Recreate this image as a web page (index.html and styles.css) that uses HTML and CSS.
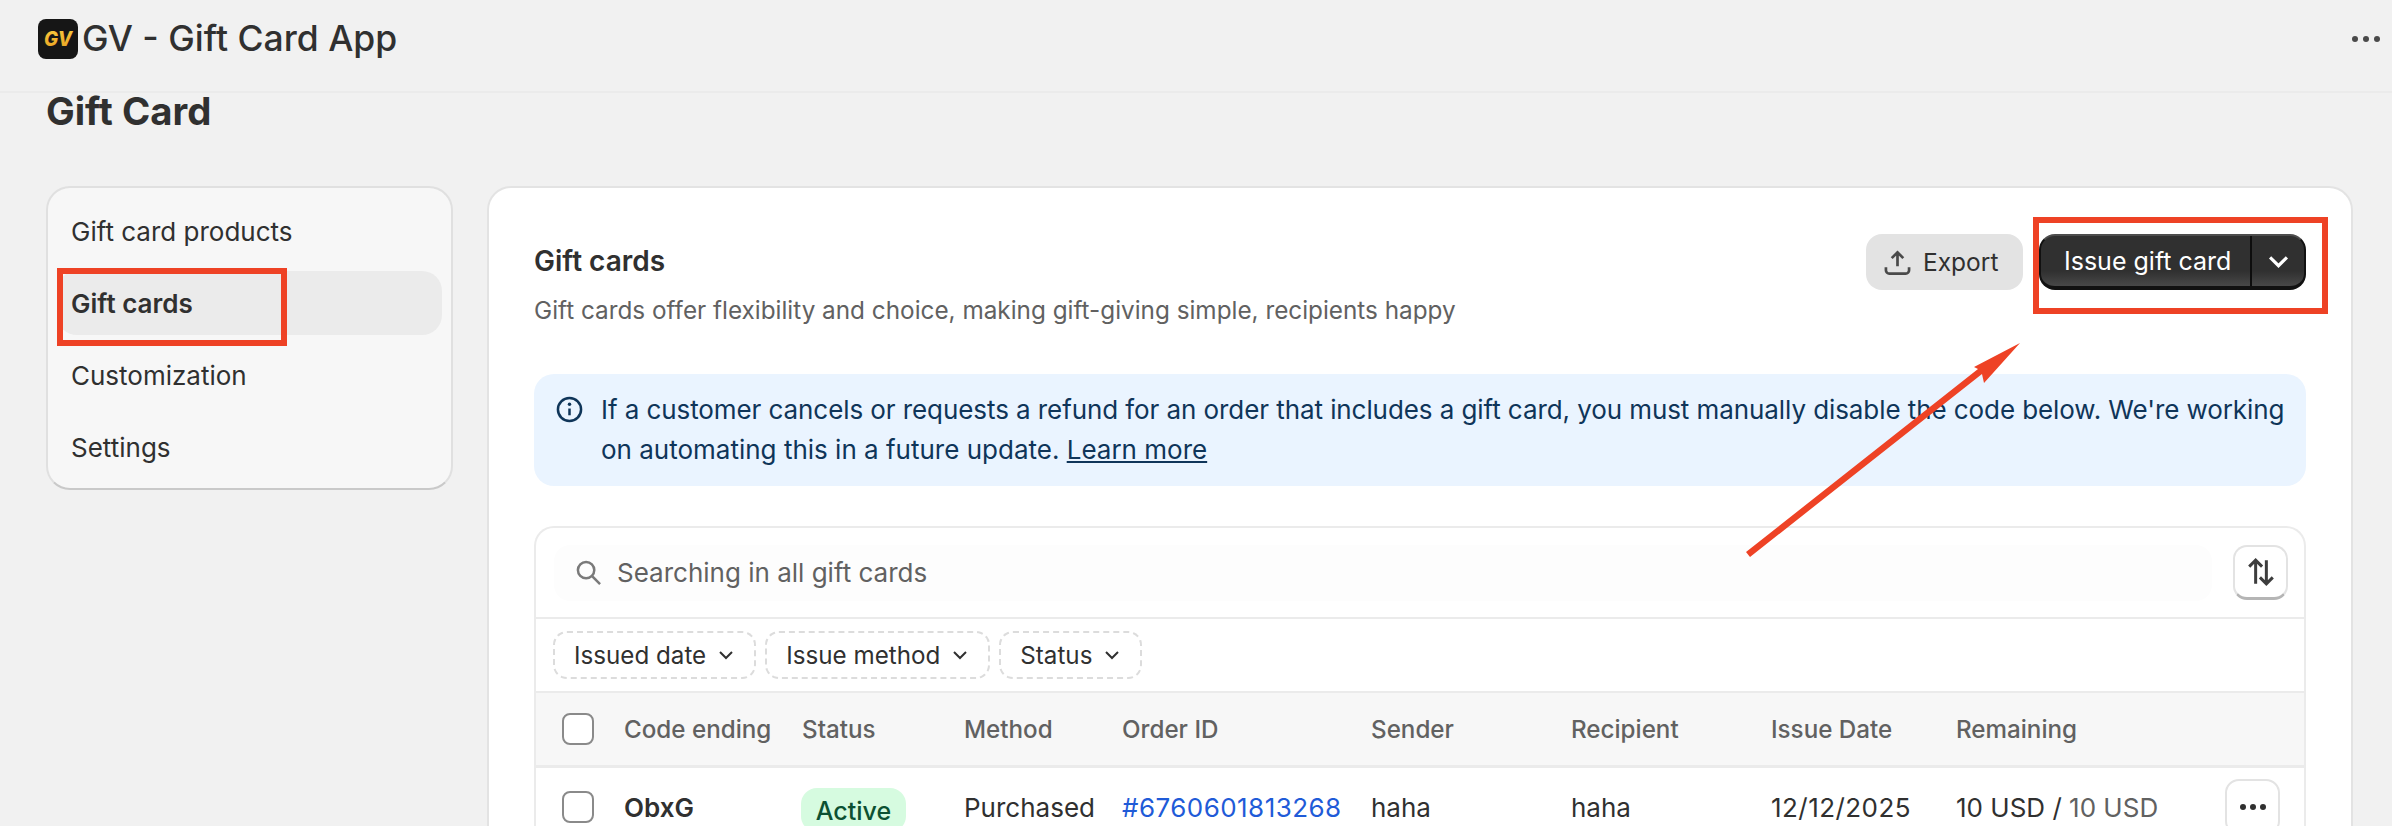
FILE: index.html
```html
<!DOCTYPE html>
<html lang="en">
<head>
	<meta charset="UTF-8">
	<title>GV - Gift Card App</title>
	<link rel="stylesheet" href="styles.css">
</head>
<body>
	<!-- top bar -->
	<div class="topbar">
		<div class="app">
			<svg class="logo" viewBox="0 0 40 40">
				<defs>
					<linearGradient id="gold" x1="0" y1="0" x2="0" y2="1">
						<stop offset="0" stop-color="#f9cc40"/>
						<stop offset="1" stop-color="#e8a020"/>
					</linearGradient>
				</defs>
				<rect width="40" height="40" rx="8" fill="#161616"/>
				<text class="logo-text" x="6" y="27" textLength="28" lengthAdjust="spacingAndGlyphs" fill="url(#gold)">GV</text>
			</svg>
			<span class="app-name">GV - Gift Card App</span>
		</div>
		<svg class="top-dots" viewBox="0 0 28 8"><circle cx="3" cy="4" r="3"/><circle cx="14" cy="4" r="3"/><circle cx="25" cy="4" r="3"/></svg>
	</div>

	<div class="page">
		<h1 class="page-title">Gift Card</h1>
		<div class="layout">
			<!-- side menu -->
			<ul class="side">
				<li>Gift card products</li>
				<li class="active">Gift cards</li>
				<li>Customization</li>
				<li>Settings</li>
			</ul>

			<div class="card">
				<div class="card-head">
					<div class="card-intro">
						<h2>Gift cards</h2>
						<p>Gift cards offer flexibility and choice, making gift-giving simple, recipients happy</p>
					</div>
					<div class="actions">
						<button class="btn-export">
							<svg viewBox="0 0 28 28" class="export-icon"><path d="M14 18V4M8 9.500l6-6 6 6M2 19v3a3.500 3.500 0 0 0 3.500 3.500h17A3.500 3.500 0 0 0 26 22v-3"/></svg>
							Export
						</button>
						<div class="btn-issue">
							<span class="issue-label">Issue gift card</span>
							<span class="issue-arrow"><svg viewBox="0 0 20 14"><path d="M2 3l8 8 8-8"/></svg></span>
						</div>
					</div>
				</div>

				<div class="banner">
					<svg class="info" viewBox="0 0 28 28"><circle cx="14" cy="14" r="12"/><path d="M14 13v7"/><circle class="dot" cx="14" cy="8.500" r="1.800"/></svg>
					<p>If a customer cancels or requests a refund for an order that includes a gift card, you must manually disable the code below. We're working on automating this in a future update. <a href="#">Learn more</a></p>
				</div>

				<div class="panel">
					<div class="search-row">
						<div class="search">
							<svg viewBox="0 0 28 28"><circle cx="11.500" cy="11.500" r="8.500"/><path d="M18 18l8 8"/></svg>
							<span>Searching in all gift cards</span>
						</div>
						<button class="btn-sort">
							<svg viewBox="0 0 28 28"><path d="M9 25V3M3 9l6-6 6 6M19 3v22M13 19l6 6 6-6"/></svg>
						</button>
					</div>
					<div class="filters">
						<span class="pill">Issued date <svg viewBox="0 0 16 10"><path d="M2 2l6 6 6-6"/></svg></span>
						<span class="pill">Issue method <svg viewBox="0 0 16 10"><path d="M2 2l6 6 6-6"/></svg></span>
						<span class="pill">Status <svg viewBox="0 0 16 10"><path d="M2 2l6 6 6-6"/></svg></span>
					</div>
					<div class="row row-head">
						<span class="check"></span>
						<span>Code ending</span>
						<span>Status</span>
						<span>Method</span>
						<span>Order ID</span>
						<span>Sender</span>
						<span>Recipient</span>
						<span>Issue Date</span>
						<span>Remaining</span>
					</div>
					<div class="row row-body">
						<span class="check"></span>
						<span class="code">ObxG</span>
						<span><span class="badge">Active</span></span>
						<span>Purchased</span>
						<a class="order num" href="#">#6760601813268</a>
						<span>haha</span>
						<span>haha</span>
						<span class="num">12/12/2025</span>
						<span>10 USD / <span class="muted">10 USD</span></span>
						<span class="more"><svg viewBox="0 0 28 8"><circle cx="4" cy="4" r="3"/><circle cx="14" cy="4" r="3"/><circle cx="24" cy="4" r="3"/></svg></span>
					</div>
				</div>
			</div>
		</div>
	</div>

	<!-- annotations drawn over the screenshot -->
	<div class="mark mark-menu"></div>
	<div class="mark mark-issue"></div>
	<svg class="arrow" viewBox="0 0 2392 826">
		<path d="M1746 552L1978 369L1974 367L2020 343L1984 383L1982 374L1750 557Z"/>
	</svg>
</body>
</html>
```

FILE: styles.css
```css
* {
	margin: 0;
	padding: 0;
	box-sizing: border-box;
}
html, body {
	height: 826px;
	overflow: hidden;
}
body {
	position: relative;
	background-color: #f1f1f1;
	color: #303030;
	font-family: Inter, "Liberation Sans", sans-serif;
	font-size: 26px;
}
button {
	font: inherit;
	border: none;
}

/* top bar */
.topbar {
	display: flex;
	align-items: center;
	justify-content: space-between;
	height: 93px;
	padding: 0 12px 14px 38px;
	border-bottom: 2px solid #ebebeb;
}
.app {
	display: flex;
	align-items: center;
	gap: 4px;
}
.logo {
	width: 40px;
	height: 40px;
}
.logo-text {
	font-size: 20px;
	font-weight: 800;
	font-style: italic;
}
.app-name {
	font-size: 35.500px;
	font-weight: 500;
	color: #303030;
}
.top-dots {
	width: 28px;
	height: 8px;
	fill: #4a4a4a;
}

/* page */
.page {
	padding: 0 39px 0 46px;
}
.page-title {
	font-size: 38.300px;
	line-height: 40px;
	font-weight: 700;
	margin-top: -2px;
	margin-bottom: 55px;
}
.layout {
	display: flex;
	align-items: flex-start;
	gap: 34px;
}

/* side menu */
.side {
	flex: none;
	width: 407px;
	height: 304px;
	padding: 11px 9px;
	list-style: none;
	background-color: #f7f7f7;
	border: 2px solid #e0e0e0;
	border-bottom-color: #c9c9c9;
	border-radius: 24px;
}
.side li {
	height: 64px;
	line-height: 66px;
	padding-left: 14px;
	margin-bottom: 8px;
	border-radius: 20px;
}
.side .active {
	background-color: #ebebeb;
	font-weight: 600;
}

/* main card */
.card {
	flex: 1;
	height: 640px;
	padding: 46px 45px 0 45px;
	overflow: hidden;
	background-color: #fff;
	border: 2px solid #e3e3e3;
	border-bottom: none;
	border-radius: 24px 24px 0 0;
}
.card-head {
	display: flex;
	justify-content: space-between;
	align-items: flex-start;
	height: 140px;
}
.card-intro {
	padding-top: 9px;
}
.card-intro h2 {
	font-size: 28px;
	line-height: 36px;
	font-weight: 600;
	margin-bottom: 13px;
}
.card-intro p {
	line-height: 36px;
	color: #616161;
	font-size: 24.300px;
}
.actions {
	display: flex;
	gap: 16px;
}
.btn-export {
	display: flex;
	align-items: center;
	gap: 12px;
	width: 157px;
	height: 56px;
	padding-left: 18px;
	color: #303030;
	background-color: #e3e3e3;
	border-radius: 16px;
	font-size: 24.500px;
}
.export-icon {
	width: 27px;
	height: 27px;
	fill: none;
	stroke: #4a4a4a;
	stroke-width: 2.800;
}
.btn-issue {
	display: flex;
	width: 267px;
	height: 56px;
	color: #fff;
	background: linear-gradient(#303030 70%, #484848);
	border: 2px solid #111;
	border-top-color: #4d4d4d;
	border-bottom-width: 4px;
	border-radius: 16px;
	font-size: 25px;
}
.issue-label {
	flex: 1;
	line-height: 50px;
	padding-left: 23px;
	border-right: 2px solid #0d0d0d;
}
.issue-arrow {
	display: flex;
	align-items: center;
	justify-content: center;
	width: 52px;
}
.issue-arrow svg {
	width: 21px;
	height: 15px;
	fill: none;
	stroke: #fff;
	stroke-width: 3;
}

/* info banner */
.banner {
	display: flex;
	gap: 18px;
	height: 112px;
	padding: 16px 0 0 22px;
	margin-bottom: 40px;
	background-color: #eaf4ff;
	border-radius: 20px;
	color: #0f3559;
	line-height: 40px;
}
.banner p::first-line {
	letter-spacing: -0.080px;
}
.info {
	flex: none;
	width: 27px;
	height: 27px;
	margin-top: 6px;
	fill: none;
	stroke: #0f3559;
	stroke-width: 2.600;
}
.info .dot {
	fill: #0f3559;
	stroke: none;
}
.banner a {
	color: #0f3559;
}

/* table panel */
.panel {
	height: 320px;
	overflow: hidden;
	border: 2px solid #ebebeb;
	border-bottom: none;
	border-radius: 20px 20px 0 0;
}
.search-row {
	display: flex;
	align-items: center;
	justify-content: space-between;
	height: 91px;
	padding: 0 16px 0 18px;
	border-bottom: 2px solid #ebebeb;
}
.search {
	display: flex;
	align-items: center;
	gap: 15px;
	width: 1658px;
	height: 56px;
	padding-left: 21px;
	color: #616161;
	background-color: #fdfdfd;
	border-radius: 16px;
}
.search svg {
	width: 27px;
	height: 27px;
	fill: none;
	stroke: #7a7a7a;
	stroke-width: 2.600;
}
.btn-sort {
	display: flex;
	align-items: center;
	justify-content: center;
	width: 55px;
	height: 55px;
	background-color: #fff;
	border: 2px solid #e3e3e3;
	border-bottom: 3px solid #b5b5b5;
	border-radius: 14px;
}
.btn-sort svg {
	width: 30px;
	height: 30px;
	fill: none;
	stroke: #3d3d3d;
	stroke-width: 2.800;
}
.filters {
	display: flex;
	align-items: center;
	gap: 9px;
	height: 74px;
	padding-left: 17px;
	border-bottom: 2px solid #ebebeb;
}
.pill {
	display: flex;
	align-items: center;
	gap: 12px;
	height: 48px;
	padding: 0 20px 0 19px;
	border: 2px dashed #dcdcdc;
	border-radius: 14px;
	font-size: 24.200px;
}
.pill svg {
	width: 16px;
	height: 10px;
	fill: none;
	stroke: #303030;
	stroke-width: 2;
}
.row {
	display: grid;
	grid-template-columns: 62px 178px 162px 158px 249px 200px 200px 185px 269px 55px;
	align-items: center;
	padding-left: 26px;
}
.row-head {
	height: 75px;
	background-color: #f7f7f7;
	border-bottom: 3px solid #ebebeb;
	color: #616161;
	font-size: 24.200px;
	font-weight: 500;
}
.row-body {
	height: 78px;
	font-size: 26px;
}
.num {
	letter-spacing: 0.450px;
}
.check {
	width: 32px;
	height: 32px;
	background-color: #fff;
	border: 2px solid #8a8a8a;
	border-radius: 8px;
}
.code {
	font-weight: 600;
}
.badge {
	display: inline-block;
	width: 105px;
	height: 44px;
	margin: 5px 0 0 -1px;
	line-height: 46px;
	text-align: center;
	background-color: #d6fbe0;
	border-radius: 16px;
	color: #0c5132;
	font-weight: 500;
	font-size: 25px;
}
.order {
	color: #1f5bd8;
	text-decoration: none;
}
.muted {
	color: #616161;
}
.more {
	display: flex;
	align-items: center;
	justify-content: center;
	height: 56px;
	border: 2px solid #e3e3e3;
	border-radius: 14px;
}
.more svg {
	width: 28px;
	height: 8px;
	fill: #303030;
}

/* red annotations */
.mark {
	position: absolute;
	border: 6px solid #ee4225;
}
.mark-menu {
	left: 57px;
	top: 268px;
	width: 230px;
	height: 78px;
}
.mark-issue {
	left: 2033px;
	top: 217px;
	width: 295px;
	height: 97px;
}
.arrow {
	position: absolute;
	left: 0;
	top: 0;
	width: 2392px;
	height: 826px;
	fill: #ee4225;
}
```
